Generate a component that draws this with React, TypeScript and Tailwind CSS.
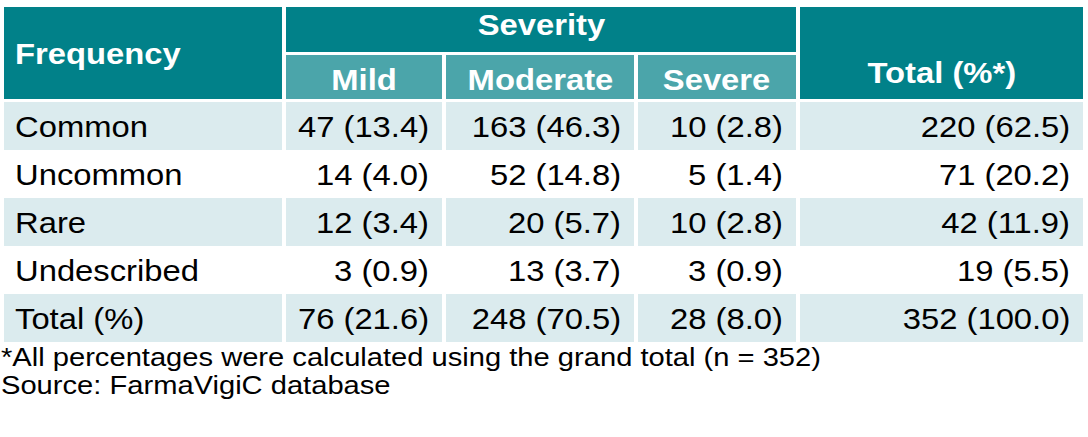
const ROWS = [
  { label: "Common", mild: "47 (13.4)", moderate: "163 (46.3)", severe: "10 (2.8)", total: "220 (62.5)", shaded: true },
  { label: "Uncommon", mild: "14 (4.0)", moderate: "52 (14.8)", severe: "5 (1.4)", total: "71 (20.2)", shaded: false },
  { label: "Rare", mild: "12 (3.4)", moderate: "20 (5.7)", severe: "10 (2.8)", total: "42 (11.9)", shaded: true },
  { label: "Undescribed", mild: "3 (0.9)", moderate: "13 (3.7)", severe: "3 (0.9)", total: "19 (5.5)", shaded: false },
  { label: "Total (%)", mild: "76 (21.6)", moderate: "248 (70.5)", severe: "28 (8.0)", total: "352 (100.0)", shaded: true },
];

const font = "font-['Liberation_Sans',Arial,sans-serif]";
const cols = "grid grid-cols-[278px_156px_188px_158px_283px] gap-x-[4px]";

function Num({ value, shaded }: { value: string; shaded: boolean }) {
  return (
    <div className={`h-[48px] pt-[9px] pr-[13px] text-right ${shaded ? "bg-[#dbebee]" : "bg-white"}`}>
      <span className="inline-block origin-right scale-x-[1.13] text-[29px] leading-[32px] text-black">{value}</span>
    </div>
  );
}

function HeadText({ children, origin = "origin-center" }: { children: string; origin?: string }) {
  return (
    <span className={`inline-block ${origin} scale-x-[1.13] text-[29px] leading-[32px] font-bold text-white`}>
      {children}
    </span>
  );
}

export default function App() {
  return (
    <div className={`w-[1088px] h-[437px] bg-white overflow-hidden ${font}`}>
      <div className="pl-[4px] pt-[7px]">
        {/* header */}
        <div className={`${cols} grid-rows-[45px_44px] gap-y-[3px]`}>
          <div className="row-span-2 bg-[#018189] pl-[11px] pt-[31px]">
            <HeadText origin="origin-left">Frequency</HeadText>
          </div>
          <div className="col-span-3 bg-[#018189] pt-[2px] text-center">
            <HeadText>Severity</HeadText>
          </div>
          <div className="row-span-2 bg-[#018189] pt-[50px] text-center">
            <HeadText>Total (%*)</HeadText>
          </div>
          <div className="bg-[#4ba5aa] pt-[9px] text-center">
            <HeadText>Mild</HeadText>
          </div>
          <div className="bg-[#4ba5aa] pt-[9px] text-center">
            <HeadText>Moderate</HeadText>
          </div>
          <div className="bg-[#4ba5aa] pt-[9px] text-center">
            <HeadText>Severe</HeadText>
          </div>
        </div>

        {/* body */}
        <div className="mt-[3px]">
          {ROWS.map((r) => (
            <div key={r.label} className={cols}>
              <div className={`h-[48px] pt-[9px] pl-[11px] ${r.shaded ? "bg-[#dbebee]" : "bg-white"}`}>
                <span className="inline-block origin-left scale-x-[1.13] text-[29px] leading-[32px] text-black">{r.label}</span>
              </div>
              <Num value={r.mild} shaded={r.shaded} />
              <Num value={r.moderate} shaded={r.shaded} />
              <Num value={r.severe} shaded={r.shaded} />
              <Num value={r.total} shaded={r.shaded} />
            </div>
          ))}
        </div>
      </div>

      {/* footnotes */}
      <div className="mt-[1px] pl-[1px] text-[26px] leading-[28px] text-black">
        <p>
          <span className="inline-block origin-left scale-x-[1.12]">
            *All percentages were calculated using the grand total (n = 352)
          </span>
        </p>
        <p>
          <span className="inline-block origin-left scale-x-[1.12]">Source: FarmaVigiC database</span>
        </p>
      </div>
    </div>
  );
}
